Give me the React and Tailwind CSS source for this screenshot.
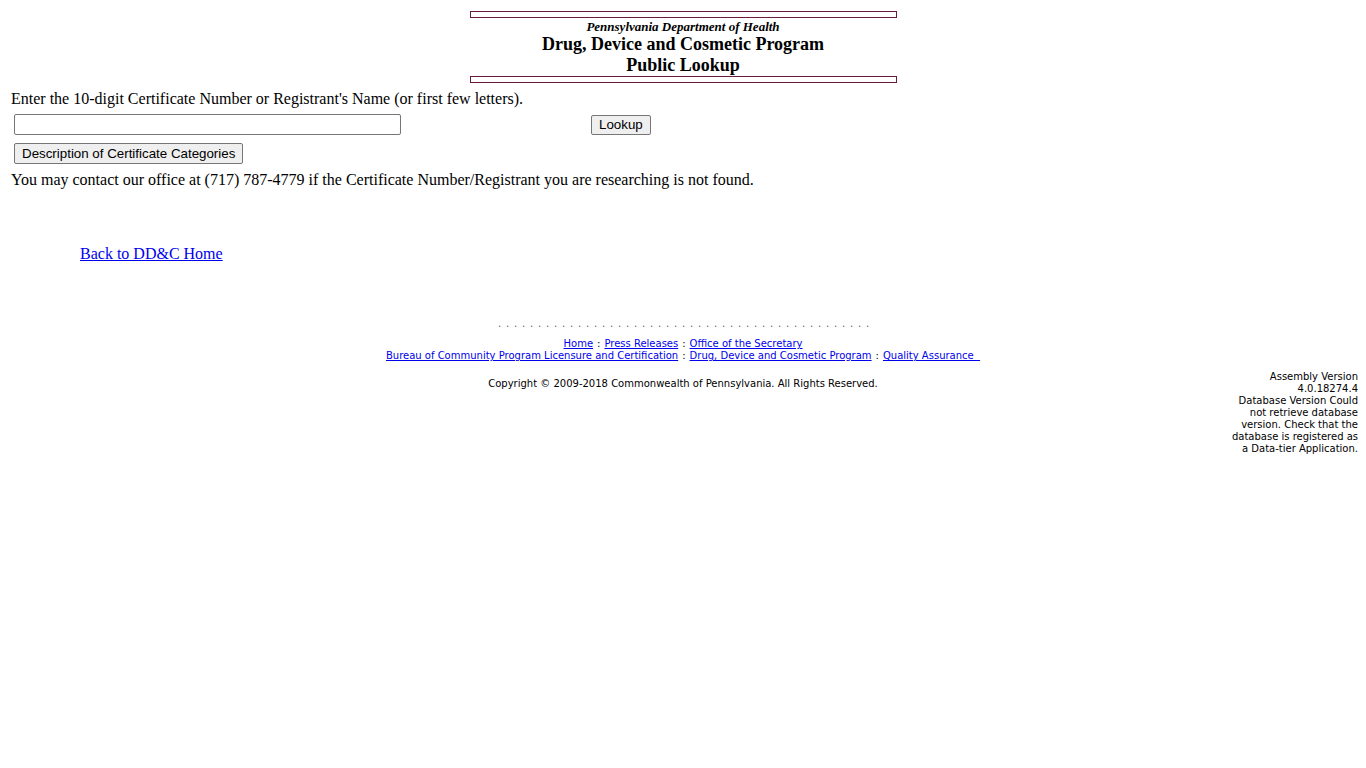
import React from 'react';

const serif = { fontFamily: '"Liberation Serif", "Times New Roman", serif' };
const sans = { fontFamily: '"DejaVu Sans", Verdana, sans-serif' };

const Bar = () => (
  <div className="h-[7px] w-[427px] border border-[#6a1a3c] bg-white" />
);

const footerLinks1 = ['Home', 'Press Releases', 'Office of the Secretary'];
const footerLinks2 = [
  'Bureau of Community Program Licensure and Certification',
  'Drug, Device and Cosmetic Program',
  'Quality Assurance\u00a0\u00a0',
];

const LinkRow = ({ links }) => (
  <div className="flex justify-center items-baseline">
    {links.map((l, i) => (
      <React.Fragment key={l}>
        {i > 0 && <span className="px-[4px]">:</span>}
        <a href="#" className="text-[#0000ee] underline">{l}</a>
      </React.Fragment>
    ))}
  </div>
);

export default function App() {
  return (
    <div className="min-h-[768px] bg-white text-black" style={serif}>
      {/* Header */}
      <div className="flex flex-col items-center pt-[11px]">
        <Bar />
        <div className="italic font-bold text-[13px] leading-[15px] mt-[1px]">Pennsylvania Department of Health</div>
        <div className="font-bold text-[18px] leading-[21px]">Drug, Device and Cosmetic Program</div>
        <div className="font-bold text-[18px] leading-[21px]">Public Lookup</div>
        <div><Bar /></div>
      </div>

      {/* Form */}
      <div className="px-[11px] text-[16px] leading-[18px]">
        <div className="mt-[7px]">Enter the 10-digit Certificate Number or Registrant's Name (or first few letters).</div>
        <div className="flex items-center mt-[6px] pl-[3px]">
          <input
            type="text"
            className="w-[387px] h-[21px] border border-[#767676] rounded-[2px] bg-white"
          />
          <button
            className="ml-[190px] h-[20px] px-[7px] text-[13.33px] border border-[#767676] rounded-[2px] bg-[#efefef]"
            style={{ fontFamily: '"Liberation Sans", Arial, sans-serif' }}
          >
            Lookup
          </button>
        </div>
        <div className="mt-[8px] pl-[3px]">
          <button
            className="h-[21px] px-[7px] text-[13.33px] border border-[#767676] rounded-[2px] bg-[#efefef]"
            style={{ fontFamily: '"Liberation Sans", Arial, sans-serif' }}
          >
            Description of Certificate Categories
          </button>
        </div>
        <div className="mt-[7px]">You may contact our office at (717) 787-4779 if the Certificate Number/Registrant you are researching is not found.</div>
        <div className="mt-[56px] pl-[69px]">
          <a href="#" className="text-[#0000ee] underline">Back to DD&amp;C Home</a>
        </div>
      </div>

      {/* Footer */}
      <div className="grid grid-cols-[1fr_auto_1fr] mt-[55px] text-[10px] leading-[12px]" style={sans}>
        <div />
        <div className="flex flex-col items-center">
          <div className="flex gap-[6px] text-[#555]">
            {Array.from({ length: 47 }).map((_, i) => (
              <span key={i} className="w-[2px] text-center">.</span>
            ))}
          </div>
          <div className="mt-[8px]">
            <LinkRow links={footerLinks1} />
            <LinkRow links={footerLinks2} />
          </div>
          <div className="mt-[16px]">Copyright © 2009-2018 Commonwealth of Pennsylvania. All Rights Reserved.</div>
        </div>
        <div className="flex justify-end pr-[8px] pt-[53px]">
          <div className="text-right">
            Assembly Version<br />
            4.0.18274.4<br />
            Database Version Could<br />
            not retrieve database<br />
            version. Check that the<br />
            database is registered as<br />
            a Data-tier Application.
          </div>
        </div>
      </div>
    </div>
  );
}
